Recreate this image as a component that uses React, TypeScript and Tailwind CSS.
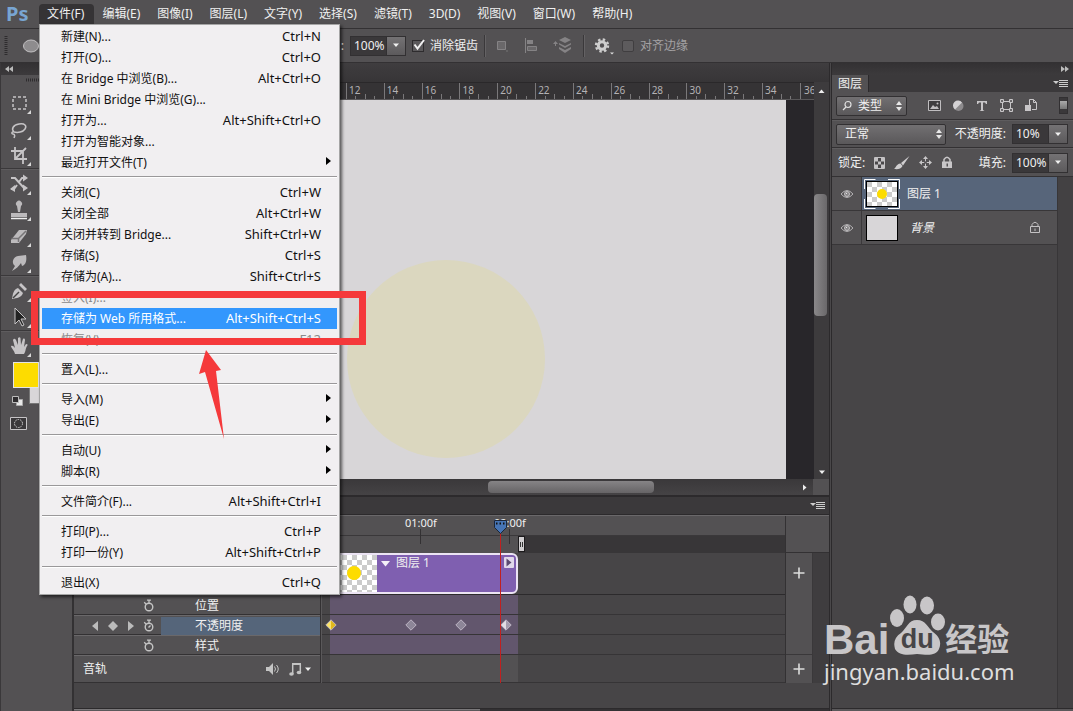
import type { ReactNode } from "react"

type MenuItem = { label: string; keys?: string; sub?: boolean; disabled?: boolean; active?: boolean }

const menus = ["编辑(E)", "图像(I)", "图层(L)", "文字(Y)", "选择(S)", "滤镜(T)", "3D(D)", "视图(V)", "窗口(W)", "帮助(H)"]

const fileMenu: MenuItem[][] = [
  [
    { label: "新建(N)...", keys: "Ctrl+N" },
    { label: "打开(O)...", keys: "Ctrl+O" },
    { label: "在 Bridge 中浏览(B)...", keys: "Alt+Ctrl+O" },
    { label: "在 Mini Bridge 中浏览(G)..." },
    { label: "打开为...", keys: "Alt+Shift+Ctrl+O" },
    { label: "打开为智能对象..." },
    { label: "最近打开文件(T)", sub: true },
  ],
  [
    { label: "关闭(C)", keys: "Ctrl+W" },
    { label: "关闭全部", keys: "Alt+Ctrl+W" },
    { label: "关闭并转到 Bridge...", keys: "Shift+Ctrl+W" },
    { label: "存储(S)", keys: "Ctrl+S" },
    { label: "存储为(A)...", keys: "Shift+Ctrl+S" },
    { label: "签入(I)...", disabled: true },
    { label: "存储为 Web 所用格式...", keys: "Alt+Shift+Ctrl+S", active: true },
    { label: "恢复(V)", keys: "F12", disabled: true },
  ],
  [{ label: "置入(L)..." }],
  [
    { label: "导入(M)", sub: true },
    { label: "导出(E)", sub: true },
  ],
  [
    { label: "自动(U)", sub: true },
    { label: "脚本(R)", sub: true },
  ],
  [{ label: "文件简介(F)...", keys: "Alt+Shift+Ctrl+I" }],
  [
    { label: "打印(P)...", keys: "Ctrl+P" },
    { label: "打印一份(Y)", keys: "Alt+Shift+Ctrl+P" },
  ],
  [{ label: "退出(X)", keys: "Ctrl+Q" }],
]

const rulerMarks = [12, 14, 16, 18, 20, 22, 24, 26, 28, 30, 32, 34]

function Caret({ className = "" }: { className?: string }) {
  return (
    <svg className={className} width="8" height="5" viewBox="0 0 8 5" fill="#f0f0f0">
      <path d="M1 0.5h6L4 4z" />
    </svg>
  )
}

function UpDown() {
  return (
    <svg width="8" height="12" viewBox="0 0 8 12" fill="#e8e8e8">
      <path d="M1 5h6L4 1zM1 7h6L4 11z" />
    </svg>
  )
}

function PanelMenuIcon() {
  return (
    <svg width="16" height="9" viewBox="0 0 16 9">
      <path d="M0 2h6L3 5z" fill="#ccc" />
      <path d="M6 1.5h9M6 3.5h9M6 5.5h9M6 7.5h9" stroke="#ccc" />
    </svg>
  )
}

function Stopwatch({ on = false }: { on?: boolean }) {
  return (
    <svg width="12" height="13" viewBox="0 0 12 13" fill="none" stroke="#c4c4c4">
      <circle cx="6" cy="8" r="3.8" strokeWidth="1.4" />
      <path d="M4 1.2h4M6 1.2v3M1.2 3.2l2 2" strokeWidth="1.3" />
      {on && <path d="M5.5 8.5l2-2" strokeWidth="1.4" />}
    </svg>
  )
}

function Checker({ w, h, size, cx, cy, r, id }: { w: number; h: number; size: number; cx: number; cy: number; r: number; id: string }) {
  return (
    <svg width={w} height={h} className="block">
      <defs>
        <pattern id={id} width={size * 2} height={size * 2} patternUnits="userSpaceOnUse">
          <rect width={size * 2} height={size * 2} fill="#fff" />
          <rect width={size} height={size} fill="#cbcbcb" />
          <rect x={size} y={size} width={size} height={size} fill="#cbcbcb" />
        </pattern>
      </defs>
      <rect width={w} height={h} fill={`url(#${id})`} />
      <circle cx={cx} cy={cy} r={r} fill="#fddc00" />
    </svg>
  )
}

function MenuRow({ item }: { item: MenuItem }) {
  const color = item.active ? "bg-[#3397fd] text-white" : item.disabled ? "text-[#8a8a8a]" : "text-[#111]"
  return (
    <button className={`relative flex h-[21px] w-full items-center justify-between pl-[19px] pr-4 ${color}`}>
      <span>{item.label}</span>
      {item.keys && <span className="text-[13px]">{item.keys}</span>}
      {item.sub && (
        <svg className="-mr-2.5 mb-1" width="5" height="8" viewBox="0 0 5 8">
          <path d="M0 0v8l5-4z" fill="#000" />
        </svg>
      )}
      {item.active && (
        <span className="pointer-events-none absolute -top-[17px] -right-[29px] -bottom-4 -left-[11px] z-10 border-[7px] border-[#f5393b]" />
      )}
    </button>
  )
}

function FileMenu() {
  return (
    <div className="absolute top-5 left-0 z-20 w-[301px] border border-[#a5a5a5] bg-[#f1eff1] px-0.5 py-px shadow-[2px_2px_3px_rgba(0,0,0,0.6)]">
      {fileMenu.map((group, i) => (
        <div key={i}>
          {i > 0 && (
            <div className="h-[9px] pt-[3px]">
              <div className="h-0.5 border-t border-b border-t-[#9a989a] border-b-white" />
            </div>
          )}
          {group.map((item) => (
            <MenuRow key={item.label} item={item} />
          ))}
        </div>
      ))}
      <svg className="pointer-events-none absolute top-[325px] left-[158px]" width="26" height="90" viewBox="0 0 26 90">
        <path d="M8 0L23 20l-5 1 8 68L7 22l-6 2z" fill="#f5393b" />
      </svg>
    </div>
  )
}

function MenuBar() {
  return (
    <nav className="flex h-7 items-center bg-[#535153] text-[#f0f0f0]">
      <span className="w-[39px] pl-1.5 text-xl/6 font-bold text-[#78a5d2]">Ps</span>
      <div className="relative">
        <button className="h-5 rounded-t-sm bg-[#353335] pr-2.5 pl-2">文件(F)</button>
        <FileMenu />
      </div>
      {menus.map((m) => (
        <button key={m} className="h-5 pr-[9px] pl-2 whitespace-nowrap">
          {m}
        </button>
      ))}
    </nav>
  )
}

function Divider() {
  return <div className="h-[22px] w-0.5 shrink-0 border-l border-r border-l-[#3a383a] border-r-[#646264]" />
}

function ValueBox({ label, value, width }: { label: string; value: string; width: string }) {
  return (
    <div className="flex h-5 border border-[#323032]">
      <input aria-label={label} defaultValue={value} className={`${width} bg-[#3a383a] pl-[3px] text-[#f0f0f0] outline-none`} />
      <button aria-label={`${label} ▾`} className="flex w-[19px] items-center justify-center border-l border-[#323032] bg-gradient-to-b from-[#747274] to-[#5c5a5c]">
        <Caret />
      </button>
    </div>
  )
}

function OptionsBar() {
  return (
    <div className="flex h-[35px] items-center border-t border-b border-[#333133] bg-[#535153] text-[#f0f0f0]">
      <svg width="40" height="22" viewBox="0 0 40 22">
        <path d="M6 1v20" stroke="#2e2c2e" strokeWidth="3" strokeDasharray="1 1" />
        <ellipse cx="31" cy="11" rx="7.5" ry="6" fill="#8e8c8e" stroke="#c4c2c4" />
      </svg>
      <div className="flex w-[310px] justify-end pr-1.5">:</div>
      <ValueBox label="缩放" value="100%" width="w-[35px]" />
      <label className="ml-1.5 flex items-center gap-1.5">
        <span className="relative flex">
          <input type="checkbox" defaultChecked className="peer size-3 appearance-none border border-[#2e2c2e] bg-[#5b595b]" />
          <svg className="pointer-events-none absolute -top-0.5 left-0 hidden peer-checked:block" width="14" height="13" viewBox="0 0 14 13" fill="none" stroke="#f0f0f0" strokeWidth="2">
            <path d="M2.5 6.5l3 4L12 2" />
          </svg>
        </span>
        <span>消除锯齿</span>
      </label>
      <div className="ml-1.5 flex items-center">
        <Divider />
        <button aria-label="路径操作" className="ml-2.5">
          <svg width="12" height="12" viewBox="0 0 12 12">
            <path d="M1.5 1.5h8v8h-8z" fill="#6a686a" stroke="#858385" />
            <path d="M10 11h2" stroke="#777" />
          </svg>
        </button>
        <button aria-label="对齐" className="ml-4">
          <svg width="15" height="15" viewBox="0 0 15 15">
            <path d="M1.5 0v15" stroke="#858385" />
            <path d="M3 2h6v4H3z" fill="#858385" />
            <path d="M3.5 8.500h9v4h-9z" fill="#6a686a" stroke="#858385" />
          </svg>
        </button>
        <button aria-label="排列" className="ml-3.5">
          <svg width="18" height="17" viewBox="0 0 18 17" fill="#858385">
            <path d="M12 0l6 3-6 3-6-3zM6 6l6 3 6-3v1.500l-6 3.500-6-3.500zM6 10l6 3 6-3v2l-6 4-6-4zM0 7l2.500-3L5 7H3v2H2V7z" />
          </svg>
        </button>
      </div>
      <div className="ml-3 flex items-center">
        <Divider />
        <button aria-label="设置" className="ml-2">
          <svg width="21" height="18" viewBox="0 0 21 18">
            <circle cx="9" cy="8.500" r="3.700" fill="none" stroke="#cecece" strokeWidth="3" />
            <circle cx="9" cy="8.500" r="6" fill="none" stroke="#cecece" strokeWidth="2.400" strokeDasharray="2.400 2.312" />
            <path d="M17 15.500h4l-2 2z" fill="#ddd" />
          </svg>
        </button>
        <label className="ml-2 flex items-center gap-1.5 text-[#a3a1a3]">
          <input type="checkbox" className="size-3 appearance-none rounded-xs border border-[#403e40] bg-[#5d5b5d]" />
          <span>对齐边缘</span>
        </label>
      </div>
    </div>
  )
}

function Tool({ name, children }: { name: string; children: ReactNode }) {
  return (
    <button aria-label={name} className="flex h-[26px] w-full items-center">
      <svg width="32" height="24" viewBox="0 0 32 24" fill="none" stroke="#c6c4c6" strokeWidth="1.500">
        {children}
        <path d="M30 23v-4l-4 4z" fill="#d8d8d8" stroke="none" />
      </svg>
    </button>
  )
}

function ToolDivider() {
  return <div className="mb-px h-0.5 border-t border-b border-t-[#3a383a] border-b-[#5e5c5e]" />
}

function Toolbar() {
  return (
    <aside className="w-[72px] shrink-0 border-l border-[#3a383a] bg-[#535153]">
      <div className="flex h-3 items-center bg-gradient-to-b from-[#333133] to-[#3c3a3c] pl-1">
        <svg width="8" height="6" viewBox="0 0 8 6" fill="#bbb">
          <path d="M4 0v6L0 3zM8 0v6L4 3z" />
        </svg>
      </div>
      <div className="flex h-[15px] justify-center pt-[3px]">
        <svg width="22" height="4">
          <path d="M0 2h22" stroke="#2e2c2e" strokeWidth="3" strokeDasharray="1 1" />
        </svg>
      </div>
      <Tool name="选框">
        <rect x="12" y="6" width="13" height="12" strokeDasharray="3 2" />
      </Tool>
      <Tool name="套索">
        <path d="M13 15c-3-3-1-7 5-8s8 2 6 5-7 4-11 3c-2-1-3 2-1 2s2 2 1 4" />
      </Tool>
      <Tool name="裁剪">
        <path d="M10 8h12v13M14 4v12h12M15 15L25 5" strokeWidth="1.800" />
      </Tool>
      <ToolDivider />
      <Tool name="内容感知移动">
        <path d="M10 6h4l9 10h2M10 17h3l3-4M18 10l3-4h4" strokeWidth="2" />
        <path d="M22 2.500l5 3.500-5 3.500zM22 12.500l5 3.500-5 3.500zM14 13l-5 4 5 3z" fill="#c6c4c6" stroke="none" />
      </Tool>
      <Tool name="仿制图章">
        <path d="M10 15h16v4H10zM17 14l-1-6a3 3 0 1 1 4 0l-1 6z" fill="#bcbabc" stroke="none" />
        <path d="M10 20.500h16" stroke="#eee" />
      </Tool>
      <Tool name="橡皮擦">
        <path d="M10 16l8-10h8l-1 4-7 9h-8z" fill="#bcbabc" stroke="none" />
        <path d="M10.500 14.500h7L25 7M17.500 15v3" stroke="#777577" />
      </Tool>
      <Tool name="涂抹">
        <path d="M11 21l3-5c-4-3-2-9 3-10l8-1c1 5 0 10-4 11l-1-3c-2 3-5 6-9 8z" fill="#bcbabc" stroke="none" />
      </Tool>
      <ToolDivider />
      <Tool name="钢笔">
        <path d="M11 20c1-5 1-9 6-11l5 5c-2 5-6 5-11 6zM18 6l2-2 6 6-2 2z" fill="#c6c4c6" stroke="none" />
        <path d="M12 19l6-6" stroke="#444" />
      </Tool>
      <Tool name="路径选择">
        <path d="M14 3v16l4-4 3 6 2-1-3-6h5z" fill="#222" strokeWidth="1" />
      </Tool>
      <ToolDivider />
      <Tool name="抓手">
        <path d="M14 20c-1-4-4-6-4-8 2-1 3 1 4 2l-2-8c1-2 2-1 3 0l2 5V4c1-1 2-1 2.500 0l.5 7 2-6c1-1 2 0 2 1l-1 7 2-3c2 0 2 1 1 2-2 4-1 5-3 8z" fill="#c6c4c6" stroke="none" />
      </Tool>
      <svg width="40" height="80" viewBox="0 0 40 80">
        <path d="M28.500 28.500h24v16h-24z" fill="#d8d6d8" stroke="#777" />
        <rect x="12.500" y="3.500" width="25" height="25" fill="#fddc00" stroke="#e4e4e4" />
        <path d="M15.500 40.500h6v6h-6z" fill="#e8e8e8" stroke="#aaa" />
        <path d="M11.500 37.500h6v6h-6z" fill="#2e2c2e" stroke="#bbb" />
        <path d="M9.500 58.500h16v12h-16z" fill="#3a383a" stroke="#c6c4c6" />
        <circle cx="17.500" cy="64.500" r="4" fill="none" stroke="#d6d6d6" strokeDasharray="1.500 1" />
      </svg>
    </aside>
  )
}

function Ruler() {
  return (
    <div className="flex h-[18px] overflow-hidden border-t border-b border-t-[#2a282a] border-b-[#5a585a] bg-[#353335] pl-[272px] text-[10px]/[14px] text-[#b4b2b4]">
      {rulerMarks.map((n) => (
        <div key={n} className="relative flex min-w-0 flex-1 items-end border-l border-[#7a787a]">
          <span className="absolute top-0 left-0.5">{n}</span>
          <i className="h-0 flex-1" />
          <i className="h-[3px] flex-1 border-l border-[#7a787a]" />
          <i className="h-[5px] flex-1 border-l border-[#7a787a]" />
          <i className="h-[3px] flex-1 border-l border-[#7a787a]" />
        </div>
      ))}
      <div className="w-3.5 overflow-hidden border-l border-[#7a787a] pl-[3px]">36</div>
    </div>
  )
}

function Document() {
  return (
    <section className="flex flex-1 flex-col">
      <div className="h-[19px] bg-gradient-to-b from-[#3f3d3f] to-[#373537]" />
      <div className="flex flex-1">
        <div className="flex min-w-0 flex-1 flex-col">
          <Ruler />
          <div className="flex flex-1 bg-[#28262a] pr-[28px] pl-[18px]">
            <div className="relative flex-1 bg-[#d8d6d8]">
              <div className="absolute top-[160px] right-[241px] size-[198px] rounded-full bg-[#dbd7bf]" />
            </div>
          </div>
        </div>
        <div className="flex w-[15px] flex-col items-center bg-[#3d3b3d] pt-[7px] pb-1">
          <svg width="7" height="5" viewBox="0 0 7 5">
            <path d="M0.500 4h6l-3-3.500z" fill="#eee" />
          </svg>
          <div className="flex w-full flex-1 flex-col pt-[100px]">
            <div className="h-[122px] w-[13px] rounded-sm bg-gradient-to-r from-[#8a888a] to-[#6a686a]" />
          </div>
          <Caret />
        </div>
      </div>
      <div className="flex h-[18px] items-center border-b-2 border-[#2c2a2c] bg-gradient-to-b from-[#3a383a] to-[#454345]">
        <div className="ml-[414px] h-3 w-[166px] rounded-sm bg-gradient-to-b from-[#868486] to-[#666466]" />
        <svg className="ml-auto" width="4" height="7" viewBox="0 0 4 7">
          <path d="M0 0.500v6l3.500-3z" fill="#eee" />
        </svg>
        <div className="ml-1.5 h-full w-4 bg-[#535153]" />
      </div>
    </section>
  )
}

function Keyframe({ fill = "#8d8698", half = "#8d8698" }: { fill?: string; half?: string }) {
  return (
    <svg width="12" height="12" viewBox="0 0 12 12" className="block">
      <path d="M6 1L1 6l5 5z" fill={fill} />
      <path d="M6 1l5 5-5 5z" fill={half} />
      <path d="M6 .8L11.200 6 6 11.200 .8 6z" fill="none" stroke="#cfc8d8" strokeWidth="0.800" />
    </svg>
  )
}

function PropertyRow({ label, active = false }: { label: string; active?: boolean }) {
  return (
    <div className="flex h-5 items-center border-t border-[#6a686a] shadow-[inset_0_-1px_0_#333133]">
      <div className="flex w-[87px] items-center justify-end gap-[9px] pr-1.5">
        {active && (
          <>
            <button aria-label="上一个关键帧">
              <svg width="7" height="10" viewBox="0 0 7 10"><path d="M6 0v10L0 5z" fill="#bbb" /></svg>
            </button>
            <button aria-label="添加关键帧">
              <svg width="10" height="10" viewBox="0 0 10 10"><path d="M5 0l5 5-5 5-5-5z" fill="#bbb" /></svg>
            </button>
            <button aria-label="下一个关键帧">
              <svg width="7" height="10" viewBox="0 0 7 10"><path d="M1 0v10l6-5z" fill="#bbb" /></svg>
            </button>
          </>
        )}
        <button aria-label={`${label} 动画`}>
          <Stopwatch on={active} />
        </button>
      </div>
      <div className={`flex h-[18px] flex-1 items-center pl-[34px] ${active ? "bg-[#55657a]" : ""}`}>{label}</div>
    </div>
  )
}

function AddButton({ label }: { label: string }) {
  return (
    <button aria-label={label}>
      <svg width="12" height="12" viewBox="0 0 12 12">
        <path d="M6 0.500v11M0.500 6h11" stroke="#ddd" strokeWidth="1.600" />
      </svg>
    </button>
  )
}

function Timeline() {
  return (
    <section className="text-[#f0f0f0]">
      <div className="flex h-[18px] items-center justify-end border-b border-[#2c2a2c] bg-[#3b393b] pr-[3px]">
        <PanelMenuIcon />
      </div>
      <div className="flex border-t border-[#6a686a] bg-[#474547]">
        <div className="w-[246px] bg-[#535153]">
          <div className="h-[79px]" />
          <PropertyRow label="位置" />
          <PropertyRow label="不透明度" active />
          <PropertyRow label="样式" />
          <div className="flex h-7 items-center border-t border-b border-t-[#6a686a] border-b-[#333133] pr-2 pl-[9px]">
            <span className="flex-1">音轨</span>
            <button aria-label="静音">
              <svg width="13" height="12" viewBox="0 0 13 12" fill="#c4c4c4">
                <path d="M0 4h3l4-4v12L3 8H0z" />
                <path d="M8.500 3.500q2 2.500 0 5M10.500 2q3.500 4 0 8" fill="none" stroke="#c4c4c4" />
              </svg>
            </button>
            <button aria-label="音频选项" className="ml-2.5 flex items-center gap-0.5">
              <svg width="13" height="13" viewBox="0 0 13 13" fill="#c4c4c4">
                <path d="M3 0h9v2H3z" />
                <path d="M3.700 1v10M11.300 1v8" stroke="#c4c4c4" strokeWidth="1.500" />
                <ellipse cx="2.500" cy="11" rx="2.300" ry="1.800" />
                <ellipse cx="10" cy="9.500" rx="2.300" ry="1.800" />
              </svg>
              <Caret />
            </button>
          </div>
        </div>
        <div className="w-0.5 border-l border-r border-l-[#333133] border-r-[#5a585a]" />
        <div className="relative min-w-0 flex-1">
          <div className="flex h-[19px] gap-[57px] bg-[#535153] pl-[83px] text-[11px]/[14px]">
            <span className="w-8 whitespace-nowrap">01:00f</span>
            <span className="w-8 whitespace-nowrap">02:00f</span>
          </div>
          <div className="flex h-[18px] border-t border-[#3a383a] bg-[#383638]">
            <div className="w-[196px] bg-[#535153]" />
            <div className="flex h-4 w-[7px] items-center justify-center gap-px border border-[#1c1a1c] bg-[#d0ced0]">
              <i className="h-[5px] w-px bg-[#333]" />
              <i className="h-[5px] w-px bg-[#333]" />
            </div>
          </div>
          <div className="h-[42px] border-b border-[#2c2a2c] pl-2">
            <div className="flex h-[41px] w-[188px] overflow-hidden rounded-md border-2 border-[#ece4f4] bg-[#7f5fb0]">
              <Checker id="clip" w={45} h={37} size={5} cx={22} cy={18} r={7} />
              <svg className="mt-1.5 ml-1" width="9" height="6" viewBox="0 0 9 6"><path d="M0 0h9L4.500 5.500z" fill="#f4f0f8" /></svg>
              <span className="ml-1.5 flex-1 text-xs/4">图层 1</span>
              <svg className="mt-0.5 mr-0.5" width="10" height="11" viewBox="0 0 10 11">
                <rect width="10" height="11" rx="1" fill="#e0d8ea" />
                <path d="M2.500 1.500v8l5-4z" fill="#5a4a70" />
              </svg>
            </div>
          </div>
          {["位置", "不透明度", "样式"].map((row) => (
            <div key={row} className="h-5 border-b border-[#363436] pl-2">
              <div className="h-full w-[188px] bg-[#62566d]" />
            </div>
          ))}
          <div className="h-7 border-b border-[#363436] pl-2">
            <div className="h-full w-[188px] bg-[#535153]" />
          </div>
          {/* Keyframes sit at their time on the opacity track */}
          <div className="absolute top-[103px] left-[3px]"><Keyframe fill="#fbe36a" half="#e0b81e" /></div>
          <div className="absolute top-[103px] left-[83px]"><Keyframe /></div>
          <div className="absolute top-[103px] left-[133px]"><Keyframe /></div>
          <div className="absolute top-[103px] left-[178px]"><Keyframe fill="#e0dce4" half="#a49cae" /></div>
          {/* Playhead */}
          <svg className="absolute top-0 left-[90px] h-full w-[110px]" fill="none">
            <path d="M8.500 13v15M97.500 13v15" stroke="#333133" />
            <path d="M88.500 16v151" stroke="#c02020" />
            <path d="M82.500 4.500h12v7l-6 6-6-6z" fill="#4674b4" stroke="#1c2638" />
            <path d="M84 7.500h9" stroke="#111" strokeWidth="2" strokeDasharray="1.500 2" />
          </svg>
        </div>
        <div className="flex w-11 flex-col border-l border-[#333133]">
          <div className="h-[37px] border-b border-[#333133] bg-[#535153]" />
          <div className="flex flex-1">
            <div className="flex w-[27px] flex-col items-center border-r border-[#3a383a] bg-[#535153]">
              <div className="flex h-[102px] w-full items-start justify-center border-b border-[#3a383a] pt-3.5">
                <AddButton label="添加媒体" />
              </div>
              <div className="flex flex-1 items-center">
                <AddButton label="添加音频" />
              </div>
            </div>
            <div className="flex-1 bg-[#3f3d3f]" />
          </div>
        </div>
      </div>
      <div className="h-[25px] bg-[#474547]" />
      <div className="flex h-[3px] border-t border-[#2c2a2c] bg-[#333133]">
        <div className="w-[406px] border-t border-[#7a787a] bg-[#5a585a]" />
      </div>
    </section>
  )
}

function Eye() {
  return (
    <button aria-label="可见性" className="flex w-[30px] items-center justify-center border-r border-[#3a383a]">
      <svg width="14" height="10" viewBox="0 0 14 10" fill="none" stroke="#b4b2b4">
        <path d="M1 5q6-7 12 0-6 7-12 0z" />
        <circle cx="7" cy="5" r="2.500" fill="#8a888a" stroke="#c4c2c4" />
        <circle cx="6.500" cy="4.500" r="0.500" fill="#fff" stroke="none" />
      </svg>
    </button>
  )
}

function LayersPanel() {
  return (
    <aside className="flex w-[241px] shrink-0 flex-col bg-[#474547] text-[#f0f0f0]">
      <div className="flex h-3 items-center justify-end bg-gradient-to-b from-[#333133] to-[#3c3a3c] pr-1">
        <svg width="8" height="6" viewBox="0 0 8 6" fill="#bbb">
          <path d="M0 0v6l4-3zM4 0v6l4-3z" />
        </svg>
      </div>
      <div className="flex h-[17px] items-center bg-[#3b393b] pr-1">
        <button className="h-full w-[37px] border-r border-[#2c2a2c] bg-[#535153] leading-4">图层</button>
        <span className="ml-auto">
          <PanelMenuIcon />
        </span>
      </div>
      <div className="bg-[#535153]">
        <div className="flex h-7 items-center border-b border-[#333133] pr-[5px] pl-1">
          <button className="flex h-5 w-[71px] items-center rounded-xs border border-[#323032] bg-gradient-to-b from-[#727072] to-[#5a585a] pr-[3px] pl-[5px]">
            <svg width="11" height="12" viewBox="0 0 11 12" fill="none" stroke="#e0e0e0" strokeWidth="1.200">
              <circle cx="6" cy="4.500" r="3" />
              <path d="M4 7l-3 3" />
            </svg>
            <span className="mr-auto ml-[5px]">类型</span>
            <UpDown />
          </button>
          <div className="ml-[21px] flex flex-1 items-center gap-3">
            <svg width="13" height="12" viewBox="0 0 13 12">
              <path d="M.5.5h12v10H.5z" fill="#3f3d3f" stroke="#c0bec0" />
              <path d="M2 9l3-4 2 2 2-1 2 3z" fill="#c0bec0" />
              <circle cx="9.500" cy="3.500" r="1" fill="#c0bec0" />
            </svg>
            <svg width="11" height="12" viewBox="0 0 11 12">
              <circle cx="5.500" cy="6" r="5" fill="#8d8b8d" />
              <path d="M2 9.500A5 5 0 1 1 9 2.500z" fill="#d4d2d4" />
            </svg>
            <svg width="12" height="12" viewBox="0 0 12 12" fill="#c8c6c8">
              <path d="M1 1h10v3h-1L9 2.500H7V10l1.500 1h-5L5 10V2.500H3L2 4H1z" />
            </svg>
            <svg width="13" height="13" viewBox="0 0 13 13" fill="none" stroke="#c8c6c8">
              <path d="M2.500 2.500h8v8h-8z" />
              <path d="M.5.5h3v3h-3zM9.500.5h3v3h-3zM.5 9.500h3v3h-3zM9.500 9.500h3v3h-3z" fill="#6a686a" />
            </svg>
            <svg width="12" height="13" viewBox="0 0 12 13">
              <path d="M4.500 6V.5h4l3 3v7H7" fill="none" stroke="#c8c6c8" />
              <path d="M8.500.5v3h3" fill="none" stroke="#c8c6c8" />
              <path d="M0 6h6v6H0z" fill="#c8c6c8" />
            </svg>
          </div>
          <button aria-label="筛选开关" className="h-[17px] w-[9px] border border-[#323032] bg-[#3a383a]">
            <span className="-mt-px block h-2 bg-gradient-to-b from-[#aaa] to-[#777]" />
          </button>
        </div>
        <div className="flex h-7 items-center justify-between border-t border-b border-t-[#5e5c5e] border-b-[#333133] pr-[5px] pl-1">
          <button className="flex h-[21px] w-[110px] items-center justify-between rounded-xs border border-[#323032] bg-gradient-to-b from-[#727072] to-[#5a585a] pr-0.5 pl-2">
            <span>正常</span>
            <UpDown />
          </button>
          <div className="flex items-center gap-1.5">
            <span>不透明度:</span>
            <ValueBox label="不透明度" value="10%" width="w-[35px]" />
          </div>
        </div>
        <div className="flex h-[29px] items-center justify-between border-t border-b border-t-[#5e5c5e] border-b-[#333133] pr-[5px] pl-1.5">
          <div className="flex items-center gap-[9px]">
            <span>锁定:</span>
            <svg width="11" height="12" viewBox="0 0 11 12" fill="#c4c2c4">
              <path d="M.5.5h10v11H.5z" fill="#4a484a" stroke="#c4c2c4" />
              <path d="M1 1h3v3.500H1zM7 1h3v3.500H7zM4 4.500h3v3H4zM1 7.500h3V11H1zM7 7.500h3V11H7z" />
            </svg>
            <svg width="16" height="14" viewBox="0 0 16 14" fill="#d0ced0">
              <path d="M15.500 0L7 7l2 2.500zM6.500 7.500L8.500 10C7 13 4 13.500 0 13c2-1 2-5 6.500-5.500z" />
            </svg>
            <svg width="13" height="13" viewBox="0 0 13 13" fill="#c8c6c8">
              <path d="M6.500 1v11M1 6.500h11" stroke="#c8c6c8" />
              <path d="M4 3l2.500-3L9 3zM4 10l2.500 3L9 10zM3 4L0 6.500 3 9zM10 4l3 2.500L10 9z" />
              <circle cx="6.500" cy="6.500" r="1.300" fill="#535153" />
            </svg>
            <svg width="12" height="13" viewBox="0 0 12 13">
              <path d="M3 6V3.500q3-4.500 6 0V6" fill="none" stroke="#c8c6c8" strokeWidth="1.500" />
              <path d="M1 5.500h10V12H1z" fill="#c8c6c8" />
              <path d="M5.500 7.500h1.500v3H5.500z" fill="#535153" />
            </svg>
          </div>
          <div className="flex items-center gap-1.5">
            <span>填充:</span>
            <ValueBox label="填充" value="100%" width="w-[35px]" />
          </div>
        </div>
      </div>
      <div className="flex flex-1">
        <div className="flex-1">
          <div className="flex h-[34px] border-b border-[#383638] bg-[#535153]">
            <Eye />
            <div className="flex flex-1 items-center bg-[#57657a] pl-0.5">
              <div className="relative m-0.5 border border-black">
                <Checker id="layer" w={30} h={24} size={5} cx={15} cy={12} r={5} />
                <svg className="absolute -top-[3px] -left-[3px]" width="36" height="30" fill="none" stroke="#fff">
                  <path d="M.5 10V.5h11M24 .5h11.500V10M35.500 20v9.500H24M11.500 29.500H.5V20" />
                </svg>
              </div>
              <span className="ml-[7px]">图层 1</span>
            </div>
          </div>
          <div className="flex h-[34px] border-b border-[#383638] bg-[#535153]">
            <Eye />
            <div className="flex flex-1 items-center pr-4 pl-0.5">
              <div className="m-0.5 h-[26px] w-8 border border-black bg-[#d8d6d8]" />
              <span className="ml-2.5 flex-1 italic">背景</span>
              <svg width="12" height="13" viewBox="0 0 12 13" fill="none" stroke="#c4c2c4">
                <path d="M3 6V3.500q3-4.500 6 0V6M1.500 5.500h9v6h-9zM6 7.500v2.500" />
              </svg>
            </div>
          </div>
        </div>
        <div className="w-4 border-l border-[#383638] bg-[#434143]" />
      </div>
      <div className="h-[3px] border-t border-[#2c2a2c] bg-[#5a585a]" />
    </aside>
  )
}

function Watermark() {
  return (
    <div className="pointer-events-none absolute right-[59px] bottom-6 w-[190px] text-[#c8c6c8]">
      <div className="flex h-[60px] items-end">
        <span className="font-['Liberation_Sans'] text-[42px]/[30px] font-bold">Bai</span>
        <span className="relative flex w-[56px] shrink-0 justify-center">
          <svg width="56" height="60" viewBox="0 0 56 60" fill="#c8c6c8">
            <ellipse cx="8" cy="23" rx="7" ry="9" />
            <ellipse cx="21" cy="9.500" rx="6.500" ry="9" />
            <ellipse cx="38" cy="10.500" rx="7" ry="9" />
            <ellipse cx="49" cy="27" rx="7" ry="8.500" />
            <path d="M28 25c9 0 10 7 16 12 6 4 9 10 6 17-3 7-11 6-22 5-9 1-18 2-22-5-2-7 0-12 6-16 6-5 7-13 16-13z" />
          </svg>
          <span className="absolute bottom-0 font-['Liberation_Sans'] text-[27px]/[32px] font-bold text-[#474547]">du</span>
        </span>
        <span className="font-['Noto_Sans_CJK_SC'] text-[32px]/[36px] font-bold whitespace-nowrap">经验</span>
      </div>
      <div className="text-[22px]/[32px] text-[#dedede]">jingyan.baidu.com</div>
    </div>
  )
}

export default function App() {
  return (
    <div className="relative flex min-h-screen flex-col bg-[#535153] font-['Noto_Sans','Noto_Sans_CJK_SC',sans-serif] text-xs">
      <MenuBar />
      <OptionsBar />
      <main className="flex flex-1">
        <Toolbar />
        <div className="w-0.5 bg-[#333133]" />
        <div className="flex min-w-0 flex-1 flex-col">
          <Document />
          <Timeline />
        </div>
        <div className="w-[3px] border-r border-l border-[#2c2a2c] bg-[#4a484a]" />
        <LayersPanel />
      </main>
      <Watermark />
    </div>
  )
}
